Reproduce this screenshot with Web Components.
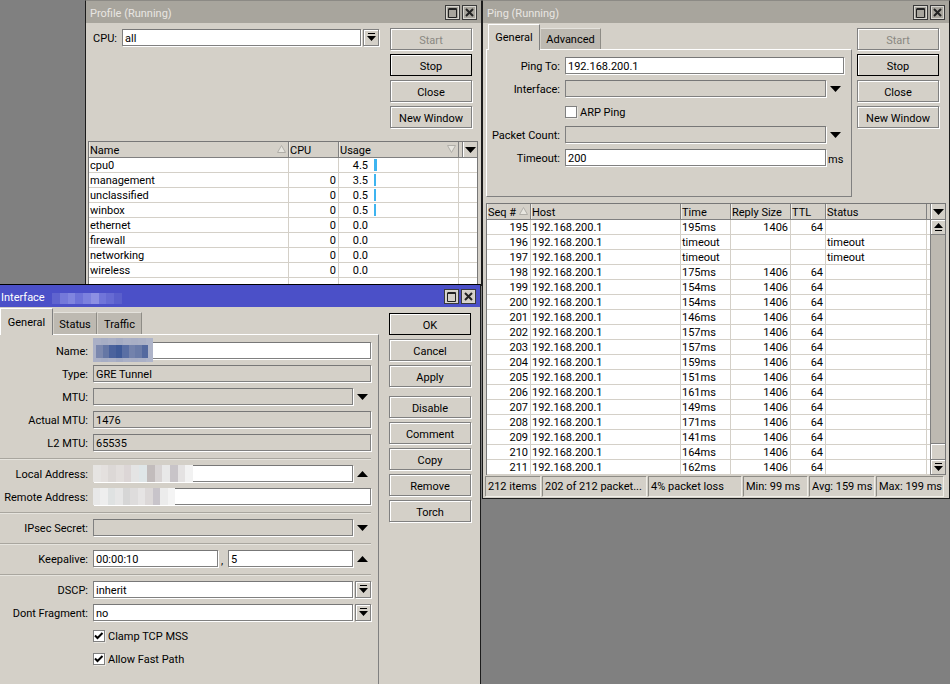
<!DOCTYPE html>
<html>
<head>
<meta charset="utf-8">
<title>Winbox</title>
<style>
  html, body { margin: 0; height: 100%; overflow: hidden; background: #808080; }
  body { font: 11px/14px Roboto, "Liberation Sans", sans-serif; color: #000; }
</style>
</head>
<body>
<mt-desktop>

  <mt-window title="Profile (Running)" style="left:85px;top:0;width:397px;height:286px;--title-pad:4px">
    <div style="display:flex;height:118px">
      <div style="width:304px;padding:6px 11px 0 3px;box-sizing:border-box">
        <mt-row label="CPU" style="--label:28px">
          <mt-input value="all"></mt-input><mt-drop></mt-drop>
        </mt-row>
      </div>
      <mt-buttons style="padding-top:5px">
        <mt-button disabled>Start</mt-button>
        <mt-button default>Stop</mt-button>
        <mt-button>Close</mt-button>
        <mt-button>New Window</mt-button>
      </mt-buttons>
    </div>
    <mt-table id="profile" style="margin-left:2px;width:390px"></mt-table>
  </mt-window>

  <mt-window title="Ping (Running)" style="left:482px;top:0;width:468px;height:499px;--title-pad:4px">
    <div style="display:flex;padding-top:1px">
      <div style="margin-left:3px;width:366px">
        <mt-tabs tabs="General,Advanced" widths="52,61" style="padding-left:2px"></mt-tabs>
        <mt-panel style="--label:73px;height:148px;border-left:1px solid #fff;border-bottom:1px solid #808080">
          <mt-row label="Ping To"><mt-input value="192.168.200.1"></mt-input></mt-row>
          <mt-row label="Interface"><mt-input disabled></mt-input><mt-arrow></mt-arrow></mt-row>
          <mt-row><mt-check>ARP Ping</mt-check></mt-row>
          <mt-row label="Packet Count"><mt-input disabled></mt-input><mt-arrow></mt-arrow></mt-row>
          <mt-row label="Timeout"><mt-input value="200"></mt-input><mt-unit>ms</mt-unit></mt-row>
        </mt-panel>
      </div>
      <mt-buttons style="margin-left:5px;padding-top:4px">
        <mt-button disabled>Start</mt-button>
        <mt-button default>Stop</mt-button>
        <mt-button>Close</mt-button>
        <mt-button>New Window</mt-button>
      </mt-buttons>
    </div>
    <mt-table id="ping" style="margin:6px 0 0 3px;width:460px"></mt-table>
    <mt-status style="margin:1px 0 0 2px">
      <mt-cell style="width:55px">212 items</mt-cell>
      <mt-cell style="width:104px">202 of 212 packet...</mt-cell>
      <mt-cell style="width:93px">4% packet loss</mt-cell>
      <mt-cell style="width:64px">Min: 99 ms</mt-cell>
      <mt-cell style="width:65px">Avg: 159 ms</mt-cell>
      <mt-cell style="width:67px">Max: 199 ms</mt-cell>
    </mt-status>
  </mt-window>

  <mt-window active title="Interface" style="left:-1px;top:284px;width:482px;height:401px;--title-pad:1px">
    <mt-blur slot="title" cols="#5f64cf,#7479da,#8085df,#6d72d8,#7c81de,#8d90e3,#7075d9,#666bd3,#5a5fcc" style="left:52px;top:8px;width:70px;height:11px"></mt-blur>
    <div style="display:flex;padding-top:1px;height:377px">
      <div style="width:379px">
        <mt-tabs tabs="General,Status,Traffic" widths="53,44,45" style="--tab-extra:1px"></mt-tabs>
        <mt-panel style="--label:88px;height:360px">
          <mt-row label="Name" style="z-index:1">
            <mt-input value="">
              <mt-blur cols="#aab0c6,#a6adc4,#aab0c6,#a4abc3,#aab0c6,#a8aec5,#aab0c6,#aeb4c9" style="left:-1px;top:-5px;width:60px;height:24px"></mt-blur>
              <mt-blur cols="#7b88ae,#6577a5,#4a629d,#3f5a98,#5a6fa4,#7382ac,#6a7ba8,#54699f" style="left:2px;top:2px;width:52px;height:13px"></mt-blur>
            </mt-input>
          </mt-row>
          <mt-row label="Type"><mt-input disabled value="GRE Tunnel"></mt-input></mt-row>
          <mt-row label="MTU"><mt-input disabled></mt-input><mt-arrow></mt-arrow></mt-row>
          <mt-row label="Actual MTU"><mt-input disabled value="1476"></mt-input></mt-row>
          <mt-row label="L2 MTU"><mt-input disabled value="65535"></mt-input></mt-row>
          <mt-sep></mt-sep>
          <mt-row label="Local Address">
            <mt-input><mt-blur cols="#e6e4e2,#e4e0de,#dcd8d6,#e2dedc,#dcd6d6,#e4e4e4,#dfe6e8,#c2bcbc,#d8d4d4,#e8e8e8,#c8c4c8,#e4e2e2,#f2f2f2" style="left:-1px;top:-1px;width:100px;height:17px"></mt-blur></mt-input>
            <mt-arrow up></mt-arrow>
          </mt-row>
          <mt-row label="Remote Address">
            <mt-input><mt-blur cols="#e8e8e8,#eeeeee,#dfe2e2,#e6e6e6,#d6d6d6,#dedcdc,#e6e4e4,#dcd8d8,#c8c4ca,#ececec,#f4f4f4" style="left:-1px;top:-1px;width:82px;height:17px"></mt-blur></mt-input>
          </mt-row>
          <mt-sep></mt-sep>
          <mt-row label="IPsec Secret"><mt-input disabled></mt-input><mt-arrow></mt-arrow></mt-row>
          <mt-sep></mt-sep>
          <mt-row label="Keepalive">
            <mt-input value="00:00:10"></mt-input><mt-unit style="width:10px;padding-left:3px;box-sizing:border-box">,</mt-unit><mt-input value="5"></mt-input><mt-arrow up></mt-arrow>
          </mt-row>
          <mt-sep></mt-sep>
          <mt-row label="DSCP"><mt-input value="inherit"></mt-input><mt-drop></mt-drop></mt-row>
          <mt-row label="Dont Fragment"><mt-input value="no"></mt-input><mt-drop></mt-drop></mt-row>
          <mt-row><mt-check checked>Clamp TCP MSS</mt-check></mt-row>
          <mt-row><mt-check checked>Allow Fast Path</mt-check></mt-row>
        </mt-panel>
      </div>
      <mt-buttons style="margin-left:10px;padding-top:5px">
        <mt-button default>OK</mt-button>
        <mt-button>Cancel</mt-button>
        <mt-button>Apply</mt-button>
        <mt-button style="margin-top:5px">Disable</mt-button>
        <mt-button>Comment</mt-button>
        <mt-button>Copy</mt-button>
        <mt-button>Remove</mt-button>
        <mt-button>Torch</mt-button>
      </mt-buttons>
    </div>
  </mt-window>

</mt-desktop>

<script>
// small helper, every element is the same shape: a template and an open shadow root
function element(name, css, html, setup) {
  const template = document.createElement('template');
  template.innerHTML = `<style>${css}</style>${html}`;
  customElements.define(name, class extends HTMLElement {
    constructor() {
      super();
      this.attachShadow({ mode: 'open' }).appendChild(template.content.cloneNode(true));
    }
    connectedCallback() {
      if (setup) setup(this, this.shadowRoot);
    }
  });
}

const DOWN = '<svg width="11" height="6" viewBox="0 0 11 6"><path d="M0 0h11L5.5 6z"/></svg>';
const UP = '<svg width="11" height="6" viewBox="0 0 11 6"><path d="M0 6h11L5.5 0z"/></svg>';

element('mt-desktop', `:host { display: block; position: relative; width: 950px; height: 684px; overflow: hidden; }`, `<slot></slot>`);

element('mt-window', `
  :host { position: absolute; display: flex; flex-direction: column; box-sizing: border-box; background: #d4d0c8;
          border: 1px solid #1c1c1c; border-top-color: #8c8a85; }
  :host([active]) { border-top-color: #000; }
  .bar { position: relative; flex: none; height: 22px; display: flex; align-items: center; justify-content: space-between;
         padding: 0 4px 0 var(--title-pad, 4px); background: #a8a59d; color: #e8e6e2; }
  :host([active]) .bar { background: #4b50c8; color: #fff; }
  #t { padding-top: 3px; }
  .ctl { display: flex; gap: 2px; }
  .ctl span { display: flex; box-sizing: border-box; width: 15px; height: 15px; align-items: center; justify-content: center;
              border: 1px solid #3a3a3a; box-shadow: inset 0 0 0 1px #d8d6d0; }
  :host([active]) .ctl span { background: #d4d0c8; }
  svg { fill: none; stroke: #222; }
  .body { flex: 1; min-height: 0; }
`, `
  <div class="bar">
    <span id="t"></span><slot name="title"></slot>
    <div class="ctl">
      <span><svg width="11" height="11"><path d="M1.500 2v8.500h8V1.500h-8M1 2.500h9"/></svg></span>
      <span><svg width="9" height="9"><path stroke-width="2" d="M1 1l7 7M8 1l-7 7"/></svg></span>
    </div>
  </div>
  <div class="body"><slot></slot></div>
`, (el, root) => { root.getElementById('t').textContent = el.getAttribute('title'); });

element('mt-blur', `
  :host { position: absolute; display: flex; }
  i { flex: 1; }
`, ``, (el, root) => {
  el.getAttribute('cols').split(',').forEach(c => {
    const cell = document.createElement('i');
    cell.style.background = c;
    root.appendChild(cell);
  });
});

element('mt-tabs', `
  :host { display: flex; align-items: flex-end; height: calc(25px + var(--tab-extra, 0px)); position: relative; z-index: 1; }
  b { font-weight: normal; box-sizing: border-box; height: calc(21px + var(--tab-extra, 0px)); padding-top: calc(4px + var(--tab-extra, 0px)); text-align: center;
      background: #bdb9b1; border-top: 1px solid #e4e2dc; border-right: 1px solid #8e8c86; border-left: 1px solid #d4d0c8; }
  b.on { height: calc(26px + var(--tab-extra, 0px)); margin-bottom: -1px; padding-top: calc(6px + var(--tab-extra, 0px)); background: #d4d0c8;
         border-top: 1px solid #fff; border-left: 1px solid #fff; border-right: 1px solid #808080; }
`, ``, (el, root) => {
  const widths = el.getAttribute('widths').split(',');
  el.getAttribute('tabs').split(',').forEach((t, i) => {
    const tab = document.createElement('b');
    tab.textContent = t;
    tab.style.width = widths[i] + 'px';
    if (i === 0) tab.className = 'on';
    root.appendChild(tab);
  });
});

element('mt-panel', `
  :host { display: flex; flex-direction: column; gap: 6px; box-sizing: border-box; padding: 7px 7px 0 0;
          border-top: 1px solid #fff; border-right: 1px solid #808080; }
`, `<slot></slot>`);

element('mt-row', `
  :host { display: grid; grid-template-columns: var(--label, 88px) 1fr; column-gap: 5px; height: 17px; position: relative; }
  label { text-align: right; line-height: 19px; white-space: nowrap; }
  div { display: flex; min-width: 0; }
`, `<label id="l"></label><div><slot></slot></div>`, (el, root) => {
  const label = el.getAttribute('label');
  if (label) root.getElementById('l').textContent = label + ':';
});

element('mt-input', `
  :host { position: relative; flex: 1 1 0; min-width: 0; display: block; box-sizing: border-box; height: 17px; padding: 0 2px;
          line-height: 17px; background: #fff; border: 1px solid #808080; border-top-color: #777; box-shadow: 1px 1px 0 #fff; white-space: nowrap; }
  :host([disabled]) { background: #d4d0c8; }
`, `<span id="v"></span><slot></slot>`, (el, root) => {
  root.getElementById('v').textContent = el.getAttribute('value') || '';
});

element('mt-arrow', `
  :host { flex: none; width: 18px; height: 17px; display: flex; align-items: center; justify-content: center; padding-left: 1px; box-sizing: border-box; }
`, ``, (el, root) => {
  root.innerHTML += el.hasAttribute('up') ? UP : DOWN;
});

element('mt-drop', `
  :host { flex: none; box-sizing: border-box; width: 16px; height: 17px; margin-left: 2px; display: flex; align-items: center; justify-content: center;
          border: 1px solid #808080; box-shadow: 1px 1px 0 #fff, inset 1px 1px 0 #fff; }
`, `<svg width="9" height="9" viewBox="0 0 9 9"><path d="M1 0h7v1H1zM0 3h9L4.500 8z"/></svg>`);

element('mt-unit', `
  :host { flex: none; width: 18px; padding-left: 2px; box-sizing: border-box; line-height: 21px; }
`, `<slot></slot>`);

element('mt-sep', `
  :host { display: block; height: 1px; margin-top: 1px; background: #a9a69f; box-shadow: 0 1px 0 #e6e4de; }
`, ``);

element('mt-check', `
  :host { display: flex; align-items: center; gap: 3px; height: 17px; }
  span { box-sizing: border-box; width: 12px; height: 12px; background: #fff; border: 1px solid #808080; box-shadow: 1px 1px 0 #e8e6e0; display: flex; margin-top: 1px; }
  em { font-style: normal; padding-top: 2px; }
  svg { display: none; }
  :host([checked]) svg { display: block; }
`, `<span><svg width="10" height="10" viewBox="0 0 10 10"><path fill="none" stroke="#000" stroke-width="2" d="M1 4.500l2.500 2.500L8.500 2"/></svg></span><em><slot></slot></em>`);

element('mt-buttons', `
  :host { flex: none; display: flex; flex-direction: column; gap: 4px; width: 82px; }
`, `<slot></slot>`);

element('mt-button', `
  :host { display: block; box-sizing: border-box; height: 22px; line-height: 24px; text-align: center; white-space: nowrap;
          border: 1px solid #808080; box-shadow: 1px 1px 0 #fff, inset 1px 1px 0 #fff; }
  :host([default]) { border-color: #000; box-shadow: inset 1px 1px 0 #fff; }
  :host([disabled]) { color: #8a8882; }
`, `<slot></slot>`);

element('mt-status', `
  :host { display: flex; gap: 2px; height: 20px; }
`, `<slot></slot>`);

element('mt-cell', `
  :host { display: block; box-sizing: border-box; padding-left: 2px; line-height: 20px; white-space: nowrap; overflow: hidden;
          border-left: 1px solid #8e8c86; border-top: 1px solid #8e8c86; box-shadow: 1px 1px 0 #f0eee8; }
`, `<slot></slot>`);

element('mt-table', `
  :host { display: block; box-sizing: border-box; border: 1px solid #777; border-bottom: 0; background: #fff; }
  .row { display: grid; }
  .head { height: 16px; background: #d4d0c8; box-sizing: border-box; border-bottom: 1px solid #808080; }
  .head div { position: relative; height: 15px; padding-left: 1px; line-height: 17px; border-right: 1px solid #808080; box-shadow: inset 1px 0 0 #eeece6; white-space: nowrap; }
  .head div.menu { border: 0; box-shadow: none; padding: 0; display: flex; justify-content: flex-end; }
  .menu span { box-sizing: border-box; width: 15px; height: 15px; display: flex; align-items: center; justify-content: center; border-left: 1px solid #808080; box-shadow: inset 1px 0 0 #fff; }
  .sort { position: absolute; right: 2px; top: 3px; }
  .rows { flex: 1; min-width: 0; }
  .wrap { display: flex; }
  .body .row { height: 15px; box-sizing: border-box; border-bottom: 1px solid #d4d0c8; }
  .body .row div { height: 14px; padding: 0 2px 0 1px; line-height: 16px; border-right: 1px solid #d4d0c8; white-space: nowrap; position: relative; }
  .body .row div.r { text-align: right; }
  .body .row div.last { border: 0; }
  i { position: absolute; left: 35px; top: 1px; height: 12px; background: #3db4f0; }
  .usage { display: inline-block; width: 28px; text-align: right; }
  .sb { flex: none; width: 15px; background: #bdb9b1; border-left: 1px solid #808080; box-sizing: border-box; display: flex; flex-direction: column; }
  .sb span { display: flex; align-items: center; justify-content: center; box-sizing: border-box; background: #d4d0c8; height: 15px; border-bottom: 1px solid #808080; box-shadow: inset 1px 1px 0 #fff; }
  .sb .gap { flex: 1; background: none; border: 0; box-shadow: none; }
  .sb .thumb { height: 17px; border-top: 1px solid #808080; }
  .arr { width: 9px; height: 9px; }
`, `<div class="row head" id="h"></div><div class="wrap"><div class="rows body" id="b"></div><div id="s"></div></div>`);

// table contents go in once the elements exist
customElements.get('mt-table').prototype.fill = function (cfg) {
  const root = this.shadowRoot;
  const tracks = cfg.cols.map(c => c.w + 'px').join(' ');
  const tri = up => `<svg class="sort" width="9" height="8" viewBox="0 0 9 8"><path fill="#e8e6e0" stroke="#b0aea8" d="${up ? 'M.5 7.500h8L4.500 .5z' : 'M.5 .5h8L4.500 7.500z'}"/></svg>`;
  const head = root.getElementById('h');
  head.style.gridTemplateColumns = tracks + ' 1fr';
  cfg.cols.forEach(c => {
    const d = document.createElement('div');
    d.innerHTML = c.name + (c.sort ? tri(c.sort === 'up') : '');
    head.appendChild(d);
  });
  const menu = document.createElement('div');
  menu.className = 'menu';
  menu.innerHTML = `<span>${DOWN}</span>`;
  head.appendChild(menu);

  const body = root.getElementById('b');
  cfg.rows.forEach(r => {
    const row = document.createElement('div');
    row.className = 'row';
    row.style.gridTemplateColumns = tracks + ' 1fr';
    r.forEach((v, i) => {
      const d = document.createElement('div');
      const col = cfg.cols[i];
      if (col.bar) {
        d.innerHTML = `<span class="usage">${v[0]}</span>` + (v[1] ? `<i style="width:${v[1]}px"></i>` : '');
      } else {
        d.textContent = v;
        if (col.right) d.className = 'r';
      }
      row.appendChild(d);
    });
    const end = document.createElement('div');
    end.className = 'last';
    row.appendChild(end);
    body.appendChild(row);
  });

  if (cfg.scroll) {
    const s = root.getElementById('s');
    s.className = 'sb';
    s.innerHTML = `<span><svg class="arr" viewBox="0 0 9 9"><path d="M0 5h9L4.500 0zM1 7h7v1H1z"/></svg></span>
      <span class="gap"></span><span class="thumb"></span>
      <span><svg class="arr" viewBox="0 0 9 9"><path d="M0 3h9L4.500 8zM1 0h7v1H1z"/></svg></span>`;
  }
};

document.getElementById('profile').fill({
  cols: [
    { name: 'Name', w: 200, sort: 'up' },
    { name: 'CPU', w: 50, right: true },
    { name: 'Usage', w: 120, bar: true, sort: 'down' }
  ],
  rows: [
    ['cpu0', '', ['4.5', 3]],
    ['management', '0', ['3.5', 2]],
    ['unclassified', '0', ['0.5', 2]],
    ['winbox', '0', ['0.5', 2]],
    ['ethernet', '0', ['0.0']],
    ['firewall', '0', ['0.0']],
    ['networking', '0', ['0.0']],
    ['wireless', '0', ['0.0']],
    ['', '', ['']]
  ]
});

const times = ['195ms', 'timeout', 'timeout', '175ms', '154ms', '154ms', '146ms', '157ms', '157ms',
  '159ms', '151ms', '161ms', '149ms', '171ms', '141ms', '164ms', '162ms'];
document.getElementById('ping').fill({
  scroll: true,
  cols: [
    { name: 'Seq #', w: 44, right: true, sort: 'up' },
    { name: 'Host', w: 150 },
    { name: 'Time', w: 50 },
    { name: 'Reply Size', w: 60, right: true },
    { name: 'TTL', w: 35, right: true },
    { name: 'Status', w: 101 }
  ],
  rows: times.map((t, i) => {
    const lost = t === 'timeout';
    return [String(195 + i), '192.168.200.1', t, lost ? '' : '1406', lost ? '' : '64', lost ? 'timeout' : ''];
  })
});
</script>
</body>
</html>
